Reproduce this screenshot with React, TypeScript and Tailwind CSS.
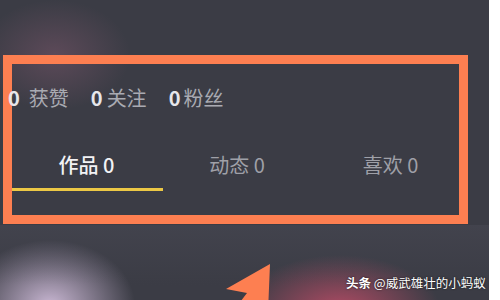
import React from "react";

export default function App() {
  const font = { fontFamily: '"Noto Sans CJK SC", "Noto Sans", sans-serif' };
  return (
    <div className="relative flex h-[300px] w-[500px] overflow-hidden bg-white" style={font}>
      <div className="relative h-[300px] w-[489px] overflow-hidden bg-[#3b3c45]">
        {/* glows */}
        <div className="pointer-events-none absolute left-[-20px] top-[0px] h-[110px] w-[150px] rounded-full bg-[radial-gradient(closest-side,rgba(120,85,105,0.55),rgba(59,60,69,0))]" />
        <div className="pointer-events-none absolute left-[-35px] top-[240px] h-[130px] w-[170px] rounded-full bg-[radial-gradient(closest-side,rgba(215,195,225,0.9),rgba(59,60,69,0))]" />
        <div className="pointer-events-none absolute left-[240px] top-[255px] h-[110px] w-[200px] rounded-full bg-[radial-gradient(closest-side,rgba(215,80,110,0.75),rgba(59,60,69,0))]" />
        <div className="pointer-events-none absolute left-[0px] top-[225px] h-[60px] w-[489px] bg-[linear-gradient(180deg,rgba(80,80,92,0.35),rgba(59,60,69,0))]" />

        <div className="relative ml-[3px] mt-[55px] flex h-[169px] w-[465px] flex-col border-[9px] border-[#fd7f51]">
          <div className="mt-[23px] flex h-[22px] items-center text-[20px] leading-[22px]">
            <span className="ml-[-4px] font-bold text-[#e6e6ea]">0</span>
            <span className="ml-[9px] text-[#a9aab2]">获赞</span>
            <span className="ml-[22px] font-bold text-[#e6e6ea]">0</span>
            <span className="ml-[4px] text-[#a9aab2]">关注</span>
            <span className="ml-[22px] font-bold text-[#e6e6ea]">0</span>
            <span className="ml-[3px] text-[#a9aab2]">粉丝</span>
          </div>
          <div className="mt-[45px] grid grid-cols-3 text-[20px] leading-[22px]">
            <div className="flex flex-col">
              <div className="text-center font-medium text-[#f2f2f4]">作品 0</div>
              <div className="mt-[12px] h-[3px] w-[151px] bg-[#ecc845]" />
            </div>
            <div className="pl-[3px] text-center text-[#9fa0a8]">动态 0</div>
            <div className="pl-[12px] text-center text-[#9fa0a8]">喜欢 0</div>
          </div>
        </div>

        {/* arrow */}
        <svg className="absolute left-0 top-0" width="489" height="300" viewBox="0 0 489 300">
          <polygon
            points="270,264 268,312 258,300 240,325 228,318 247,293 226,289"
            fill="#fd7f51"
          />
        </svg>

        {/* watermark */}
        <div className="absolute left-[346px] top-[274px] whitespace-nowrap text-[12.5px] leading-[18px] text-white [text-shadow:0_0_2px_rgba(0,0,0,0.8)]">
          <span className="font-bold">头条</span>
          <span> @威武雄壮的小蚂蚁</span>
        </div>
      </div>
      <div className="h-[300px] w-[11px] bg-white" />
    </div>
  );
}
